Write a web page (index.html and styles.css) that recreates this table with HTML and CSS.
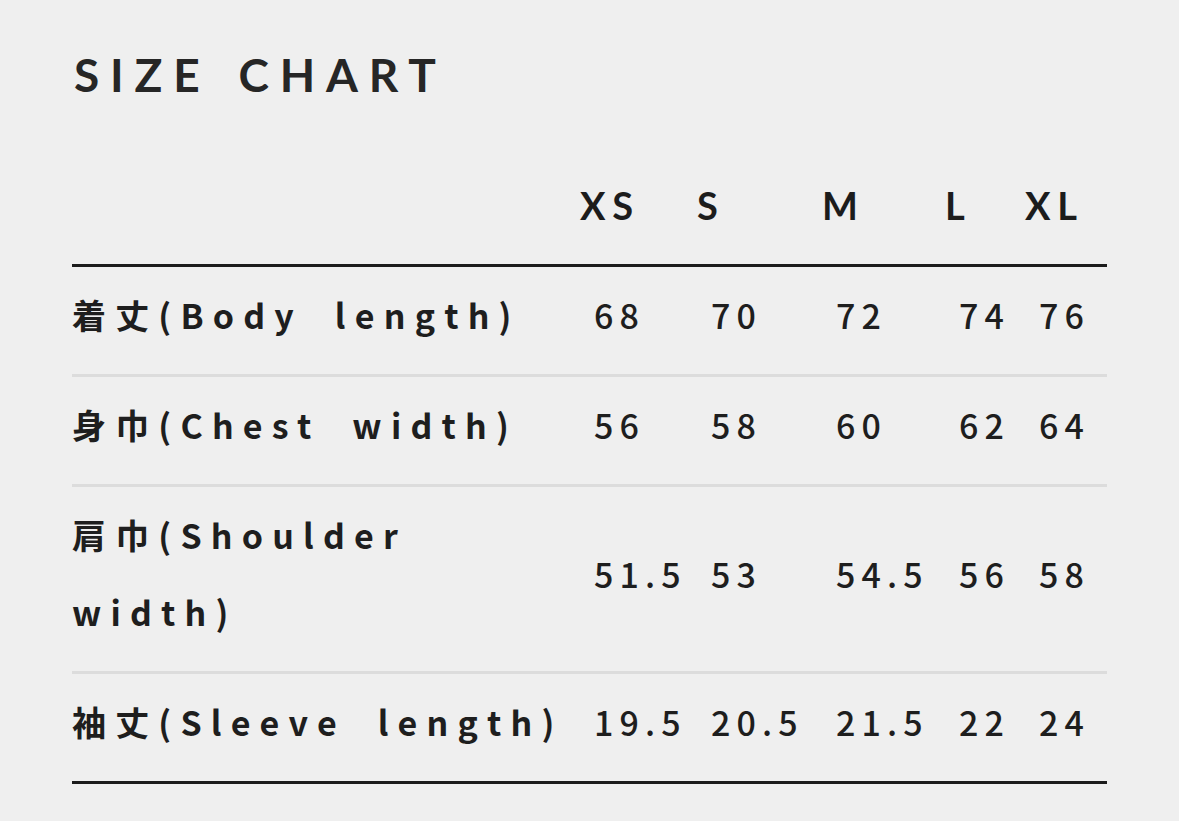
FILE: index.html
```html
<!DOCTYPE html>
<html lang="ja">
<head>
<meta charset="utf-8">
<title>Size Chart</title>
<link rel="stylesheet" href="styles.css">
</head>
<body>
<main class="page">
  <h2 class="title">SIZE CHART</h2>
  <table class="chart">
    <colgroup>
      <col class="c-label">
      <col class="c-xs">
      <col class="c-s">
      <col class="c-m">
      <col class="c-l">
      <col class="c-xl">
    </colgroup>
    <thead>
      <tr>
        <th class="blank"></th>
        <th>XS</th>
        <th>S</th>
        <th>M</th>
        <th>L</th>
        <th>XL</th>
      </tr>
    </thead>
    <tbody>
      <tr>
        <td class="label">着丈(Body length)</td>
        <td>68</td><td>70</td><td>72</td><td>74</td><td>76</td>
      </tr>
      <tr>
        <td class="label">身巾(Chest width)</td>
        <td>56</td><td>58</td><td>60</td><td>62</td><td>64</td>
      </tr>
      <tr>
        <td class="label">肩巾(Shoulder width)</td>
        <td>51.5</td><td>53</td><td>54.5</td><td>56</td><td>58</td>
      </tr>
      <tr>
        <td class="label">袖丈(Sleeve length)</td>
        <td>19.5</td><td>20.5</td><td>21.5</td><td>22</td><td>24</td>
      </tr>
    </tbody>
  </table>
</main>
</body>
</html>
```
FILE: styles.css
```css
html, body {
  margin: 0;
  padding: 0;
  background: #efefef;
}

.page {
  padding: 47px 72px 0 72px;
  color: #222;
}

.title {
  margin: 0;
  padding-left: 2px;
  font-family: "Lato", "Noto Sans", sans-serif;
  font-weight: 700;
  font-size: 46px;
  line-height: 56px;
  letter-spacing: 0.235em;
  word-spacing: 6px;
  color: #262626;
}

.chart {
  margin-top: 54px;
  width: 1035px;
  border-collapse: collapse;
  table-layout: fixed;
}

.c-label { width: 505px; }
.c-xs { width: 117px; }
.c-s { width: 125px; }
.c-m { width: 123px; }
.c-l { width: 80px; }
.c-xl { width: 85px; }

.chart th {
  text-align: left;
  padding: 10px 0 20px 3px;
  font-family: "Lato", "Noto Sans", sans-serif;
  font-weight: 700;
  font-size: 38px;
  line-height: 77px;
  letter-spacing: 0.18em;
  color: #1c1c1c;
  border-bottom: 3px solid #1c1c1c;
}

.chart td {
  padding: 9px 0 21px 17px;
  font-family: "Noto Sans CJK JP", "Noto Sans", sans-serif;
  font-weight: 500;
  font-size: 34px;
  line-height: 77px;
  letter-spacing: 0.18em;
  color: #1e1e1e;
  border-bottom: 3px solid #dcdcdc;
  vertical-align: middle;
  white-space: nowrap;
}

.chart td.label {
  padding-left: 0;
  font-weight: 700;
  letter-spacing: 0.27em;
  word-spacing: 15px;
  white-space: normal;
}

.chart tbody tr:last-child td {
  border-bottom: 3px solid #1c1c1c;
}
```
